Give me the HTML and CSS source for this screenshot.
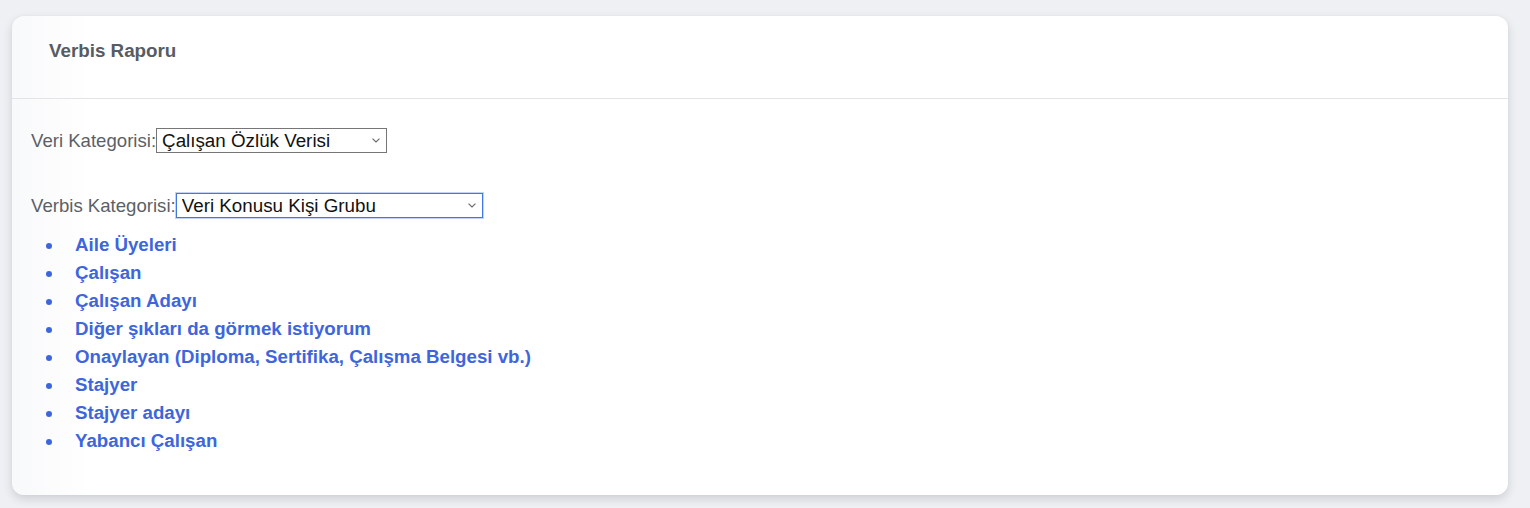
FILE: index.html
```html
<!DOCTYPE html>
<html lang="tr">
<head>
<meta charset="utf-8">
<title>Verbis Raporu</title>
<link rel="stylesheet" href="styles.css">
</head>
<body>
<div class="card">
  <div class="card-header">
    <h3 class="card-title">Verbis Raporu</h3>
  </div>
  <div class="card-body">
    <div class="field">
      <label class="label">Veri Kategorisi:</label><select class="select select-veri">
        <option>Çalışan Özlük Verisi</option>
      </select>
    </div>
    <div class="field field-second">
      <label class="label">Verbis Kategorisi:</label><select class="select select-verbis focused">
        <option>Veri Konusu Kişi Grubu</option>
      </select>
    </div>
    <ul class="items">
      <li>Aile Üyeleri</li>
      <li>Çalışan</li>
      <li>Çalışan Adayı</li>
      <li>Diğer şıkları da görmek istiyorum</li>
      <li>Onaylayan (Diploma, Sertifika, Çalışma Belgesi vb.)</li>
      <li>Stajyer</li>
      <li>Stajyer adayı</li>
      <li>Yabancı Çalışan</li>
    </ul>
  </div>
</div>
</body>
</html>
```
FILE: styles.css
```css
html, body {
  margin: 0;
  padding: 0;
}
body {
  background: #eef0f3;
  font-family: "Liberation Sans", Arial, sans-serif;
  height: 508px;
  overflow: hidden;
  padding: 16px 22px 0 12px;
}
.card {
  background: linear-gradient(to right, #f8f9fa 0, #ffffff 80px);
  border-radius: 12px;
  box-shadow: 0 4px 10px rgba(40, 45, 60, 0.16), 0 0 2px rgba(40, 45, 60, 0.06);
  height: 479px;
}
.card-header {
  height: 83px;
  box-sizing: border-box;
  border-bottom: 1px solid #e3e3ea;
  padding: 24px 37px 0;
}
.card-title {
  margin: 0;
  font-size: 18.8px;
  font-weight: bold;
  color: #575b63;
  line-height: 22px;
}
.card-body {
  padding: 29px 19px 0;
}
.field {
  height: 25px;
  display: flex;
  align-items: center;
}
.field-second {
  margin-top: 40px;
}
.label {
  font-size: 18.6px;
  color: #5b5f66;
}
.select {
  -webkit-appearance: none;
  appearance: none;
  font-family: "Liberation Sans", Arial, sans-serif;
  font-size: 18.8px;
  color: #111;
  height: 25px;
  box-sizing: border-box;
  border: 1px solid #767676;
  border-radius: 0;
  background: #fff url("data:image/svg+xml;utf8,<svg xmlns='http://www.w3.org/2000/svg' width='8' height='5' viewBox='0 0 8 5'><path d='M0.5 0.7 L4 4 L7.5 0.7' fill='none' stroke='%23666' stroke-width='1.1'/></svg>") no-repeat right 6px center;
  padding: 0 18px 0 5px;
}
.select-veri {
  width: 231px;
}
.select-verbis {
  width: 307px;
}
.focused {
  border-color: #3f78e0;
  box-shadow: 0 0 0 1px rgba(80, 130, 225, 0.35);
}
.items {
  margin: 13px 0 0;
  padding: 0 0 0 15px;
  list-style: none;
}
.items li {
  font-size: 18.7px;
  font-weight: bold;
  line-height: 28px;
  color: #3d66dc;
  display: flex;
  align-items: center;
}
.items li::before {
  content: "";
  width: 6px;
  height: 6px;
  border-radius: 50%;
  background: #3d66dc;
  margin: 2px 23px 0 0;
  flex: none;
}
```
